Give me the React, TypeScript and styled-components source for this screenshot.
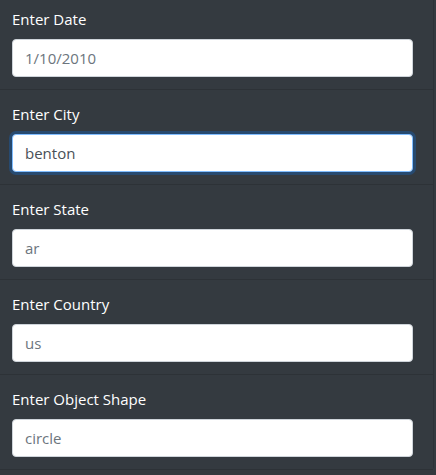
import React from "react";
import styled, { createGlobalStyle } from "styled-components";

const Global = createGlobalStyle`
  html, body { margin: 0; padding: 0; background: #343a40; }
  body { font-family: "Open Sans", "Noto Sans", sans-serif; font-size: 15px; line-height: 1.5; overflow: hidden; }
  * { box-sizing: border-box; }
`;

const List = styled.ul`
  list-style: none;
  margin: -5px 0 0 0;
  padding: 0;
  width: 434px;
  border-right: 1px solid rgba(0, 0, 0, 0.13);
  border-bottom-right-radius: 4px;
`;

const Item = styled.li`
  background: #343a40;
  padding: 12px 21px 12px 12px;
  border-bottom: 1px solid rgba(0, 0, 0, 0.13);
  display: flex;
  flex-direction: column;
`;

const Label = styled.label`
  color: #ffffff;
  height: 24px;
  line-height: 24px;
  margin-bottom: 8px;
  font-size: 15px;
`;

const Input = styled.input<{ $focused?: boolean }>`
  width: 401px;
  height: 38px;
  padding: 6px 12px;
  font-family: inherit;
  font-size: 15px;
  color: ${(p) => (p.$focused ? "#495057" : "#6c757d")};
  background: #fff;
  border: 1px solid ${(p) => (p.$focused ? "#80bdff" : "#ced4da")};
  border-radius: 4px;
  outline: none;
  box-shadow: ${(p) => (p.$focused ? "0 0 0 3px rgba(0, 123, 255, 0.25)" : "none")};
`;

const fields = [
  { label: "Enter Date", value: "1/10/2010" },
  { label: "Enter City", value: "benton", focused: true },
  { label: "Enter State", value: "ar" },
  { label: "Enter Country", value: "us" },
  { label: "Enter Object Shape", value: "circle" },
];

export default function App() {
  return (
    <>
      <Global />
      <List>
        {fields.map((f) => (
          <Item key={f.label}>
            <Label>{f.label}</Label>
            <Input readOnly value={f.value} $focused={f.focused} />
          </Item>
        ))}
      </List>
    </>
  );
}
